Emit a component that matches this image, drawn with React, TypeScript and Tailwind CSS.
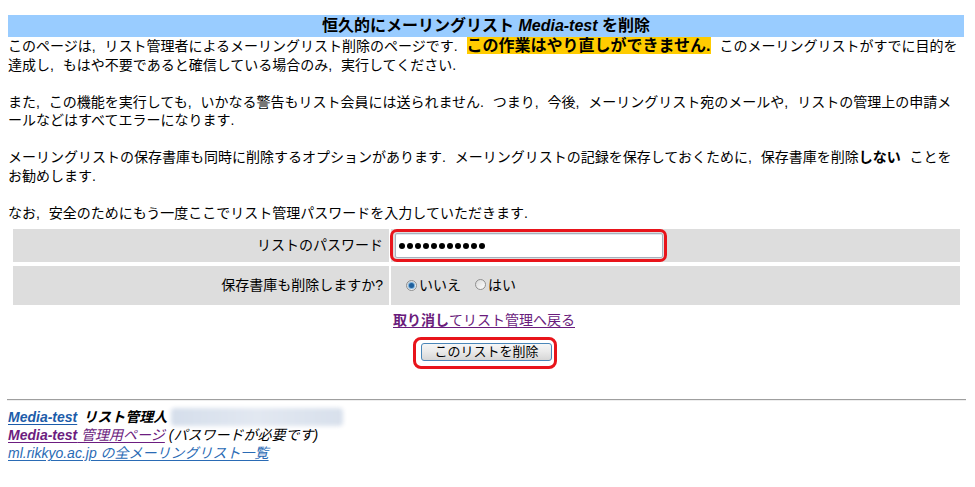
const font = "font-['Liberation_Sans','Noto_Sans_CJK_JP',sans-serif]";

function Radio({ checked }: { checked?: boolean }) {
  return (
    <span className="inline-flex h-[11px] w-[11px] items-center justify-center rounded-full border border-[#8f8f8f] bg-gradient-to-br from-[#d8d8d8] to-[#ffffff]">
      {checked && <span className="h-[5px] w-[5px] rounded-full bg-[#1f5f9c] shadow-[0_0_1px_1px_#6fa9d8]" />}
    </span>
  );
}

export default function App() {
  return (
    <div className={`min-h-[487px] bg-white pl-2 pr-[11px] pt-[15px] text-[14px] leading-[18.5px] text-black ${font}`}>
      {/* Title bar */}
      <div className="h-[22px] bg-[#99ccff] text-center text-[16px] font-bold leading-[22px]">
        恒久的にメーリングリスト <i className="font-['Liberation_Sans',sans-serif]">Media-test</i> を削除
      </div>

      {/* Explanation */}
      <div className="whitespace-nowrap [word-spacing:5px]">
        <p className="mb-[18.5px]">
          このページは, リスト管理者によるメーリングリスト削除のページです.{" "}
          <span className="bg-[#ffcc00] text-[16px] font-bold">この作業はやり直しができません.</span>{" "}
          このメーリングリストがすでに目的を
          <br />
          達成し, もはや不要であると確信している場合のみ, 実行してください.
        </p>
        <p className="mb-[18.5px]">
          また, この機能を実行しても, いかなる警告もリスト会員には送られません. つまり, 今後, メーリングリスト宛のメールや, リストの管理上の申請メ
          <br />
          ールなどはすべてエラーになります.
        </p>
        <p className="mb-[18.5px]">
          メーリングリストの保存書庫も同時に削除するオプションがあります. メーリングリストの記録を保存しておくために, 保存書庫を削除<b>しない</b> ことを
          <br />
          お勧めします.
        </p>
        <p>なお, 安全のためにもう一度ここでリスト管理パスワードを入力していただきます.</p>
      </div>

      {/* Form table */}
      <div className="ml-[5px] mt-[7px] grid w-[947px] grid-cols-[376px_569px] gap-x-[2px] gap-y-[4px]">
        <div className="flex h-[33px] items-center justify-end bg-[#dddddd] pr-[6px]">リストのパスワード</div>
        <div className="flex h-[33px] items-center bg-[#dddddd] pl-[4px]">
          <div className="relative">
            <div className="flex h-[25px] w-[268px] items-center gap-[2px] rounded-[2px] border border-[#a7b1bd] bg-white pl-[3px] shadow-[inset_0_1px_0_#e3e9ef]">
              {[...Array(11)].map((_, i) => (
                <span key={i} className="h-[6px] w-[6px] rounded-full bg-black" />
              ))}
            </div>
            <div className="absolute -bottom-[4px] -left-[5px] -right-[4px] -top-[4px] rounded-[7px] border-[3px] border-[#e8141b]" />
          </div>
        </div>

        <div className="flex h-[39px] items-center justify-end bg-[#dddddd] pr-[6px]">保存書庫も削除しますか?</div>
        <div className="flex h-[39px] items-center bg-[#dddddd] pl-[15px]">
          <Radio checked />
          <span className="ml-[2px]">いいえ</span>
          <span className="ml-[14px]">
            <Radio />
          </span>
          <span className="ml-[2px]">はい</span>
        </div>

        <div className="h-[22px]" />
        <div className="flex h-[22px] items-center pl-[2px]">
          <a href="#" className="text-[#6a1b7c] underline underline-offset-2">
            <b>取り消し</b>てリスト管理へ戻る
          </a>
        </div>

        <div className="col-span-2 flex h-[40px] justify-center pt-[7px]">
          <div className="relative h-[18px]">
            <button className="h-[18px] w-[131px] rounded-[3px] border border-[#4a86b8] bg-gradient-to-b from-[#f6f6f6] via-[#e9e9e9] to-[#d6d6d6] text-[13px] leading-[16px] text-black">
              このリストを削除
            </button>
            <div className="absolute -bottom-[9px] -left-[8px] -right-[5px] -top-[5px] rounded-[8px] border-[3px] border-[#e8141b]" />
          </div>
        </div>
      </div>

      <hr className="-ml-px -mr-[2px] mt-[24px] border-b border-t border-b-[#eeeeee] border-t-[#9f9f9f]" />

      {/* Footer */}
      <div className="mt-[7px] text-[14px] leading-[18px] italic">
        <div className="flex items-center">
          <a href="#" className="font-bold text-[#1c5caa] underline underline-offset-2">Media-test</a>
          <span className="ml-[6px] font-semibold">リスト管理人</span>
          <span className="ml-[4px] inline-block h-[18px] w-[172px] rounded-sm bg-gradient-to-r from-[#d5deeb] via-[#e2e8f1] to-[#d8e0ec] blur-[2px]" />
        </div>
        <div>
          <a href="#" className="text-[#6c1d80] underline underline-offset-2">
            <b>Media-test</b> 管理用ページ
          </a>{" "}
          (パスワードが必要です)
        </div>
        <div>
          <a href="#" className="text-[#2a6bb5] underline underline-offset-2">ml.rikkyo.ac.jp の全メーリングリスト一覧</a>
        </div>
      </div>
    </div>
  );
}
